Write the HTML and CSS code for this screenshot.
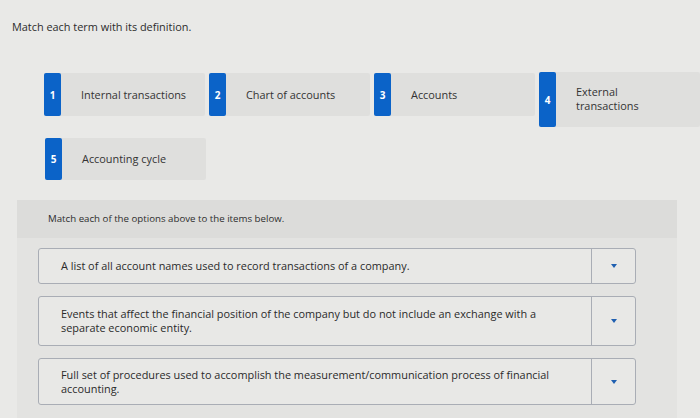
FILE: index.html
```html
<!DOCTYPE html>
<html>
<head>
<meta charset="utf-8">
<link rel="stylesheet" href="styles.css">
</head>
<body>
<div class="page">
  <p class="title">Match each term with its definition.</p>
  <div class="terms">
    <div class="tile"><span class="badge">1</span><span class="label">Internal transactions</span></div>
    <div class="tile"><span class="badge">2</span><span class="label">Chart of accounts</span></div>
    <div class="tile"><span class="badge">3</span><span class="label">Accounts</span></div>
    <div class="tile tall"><span class="badge">4</span><span class="label two">External<br>transactions</span></div>
    <div class="tile t5"><span class="badge">5</span><span class="label">Accounting cycle</span></div>
  </div>
  <div class="panel">
    <div class="panel-head">Match each of the options above to the items below.</div>
    <div class="items">
      <div class="item h1"><div class="def">A list of all account names used to record transactions of a company.</div><div class="drop"><span class="arrow"></span></div></div>
      <div class="item h2"><div class="def">Events that affect the financial position of the company but do not include an exchange with a separate economic entity.</div><div class="drop"><span class="arrow"></span></div></div>
      <div class="item h3"><div class="def">Full set of procedures used to accomplish the measurement/communication process of financial accounting.</div><div class="drop"><span class="arrow"></span></div></div>
    </div>
  </div>
</div>
</body>
</html>
```
FILE: styles.css
```css
html, body { margin: 0; padding: 0; }
body {
  background: #e9e9e7;
  font-family: "Open Sans", "Noto Sans", sans-serif;
  color: #2c2c2c;
  width: 700px;
  height: 418px;
  overflow: hidden;
}
.page { padding-top: 20px; }
.title {
  margin: 0 0 0 12px;
  font-size: 10.9px;
  line-height: 14px;
}
.terms {
  display: flex;
  flex-wrap: wrap;
  align-items: flex-start;
  column-gap: 4px;
  row-gap: 11px;
  padding-left: 44px;
  margin-top: 39px;
  width: 656px;
}
.tile {
  display: flex;
  align-items: center;
  width: 161px;
  height: 43px;
  background: #dfdfdd;
  border-radius: 2px;
}
.tile.tall { height: 55px; margin-top: -1px; }
.tile.t5 { margin-left: 1px; height: 42px; }
.badge {
  flex: none;
  width: 17px;
  height: 100%;
  background: #0b63c8;
  border-radius: 2px;
  color: #fff;
  font-weight: 700;
  font-size: 10px;
  display: flex;
  align-items: center;
  justify-content: center;
}
.label {
  padding-left: 20px;
  font-size: 10.9px;
  line-height: 14px;
  color: #333;
}
.label.two { line-height: 14px; margin-top: -2px; }
.panel {
  margin: 20px 0 0 17px;
  width: 660px;
  background: #e3e3e1;
  padding-bottom: 20px;
}
.panel-head {
  height: 38px;
  line-height: 38px;
  padding-left: 31px;
  font-size: 9.7px;
  background: #dcdcda;
  color: #2e2e2e;
}
.items {
  display: flex;
  flex-direction: column;
  gap: 12px;
  padding: 10px 0 0 21px;
}
.item {
  display: flex;
  width: 598px;
  border: 1px solid #a9adb5;
  border-radius: 3px;
  background: #e8e8e6;
  box-sizing: border-box;
}
.item.h1 { height: 36px; }
.item.h2 { height: 50px; }
.item.h3 { height: 47px; }
.def {
  flex: 1;
  display: flex;
  align-items: center;
  padding: 0 40px 0 22px;
  font-size: 10.9px;
  line-height: 14px;
  color: #2a2a2a;
}
.drop {
  flex: none;
  width: 43px;
  border-left: 1px solid #a9adb5;
  display: flex;
  align-items: center;
  justify-content: center;
}
.arrow {
  width: 0;
  height: 0;
  border-left: 3.5px solid transparent;
  border-right: 3.5px solid transparent;
  border-top: 4px solid #1f5fb0;
}
```
